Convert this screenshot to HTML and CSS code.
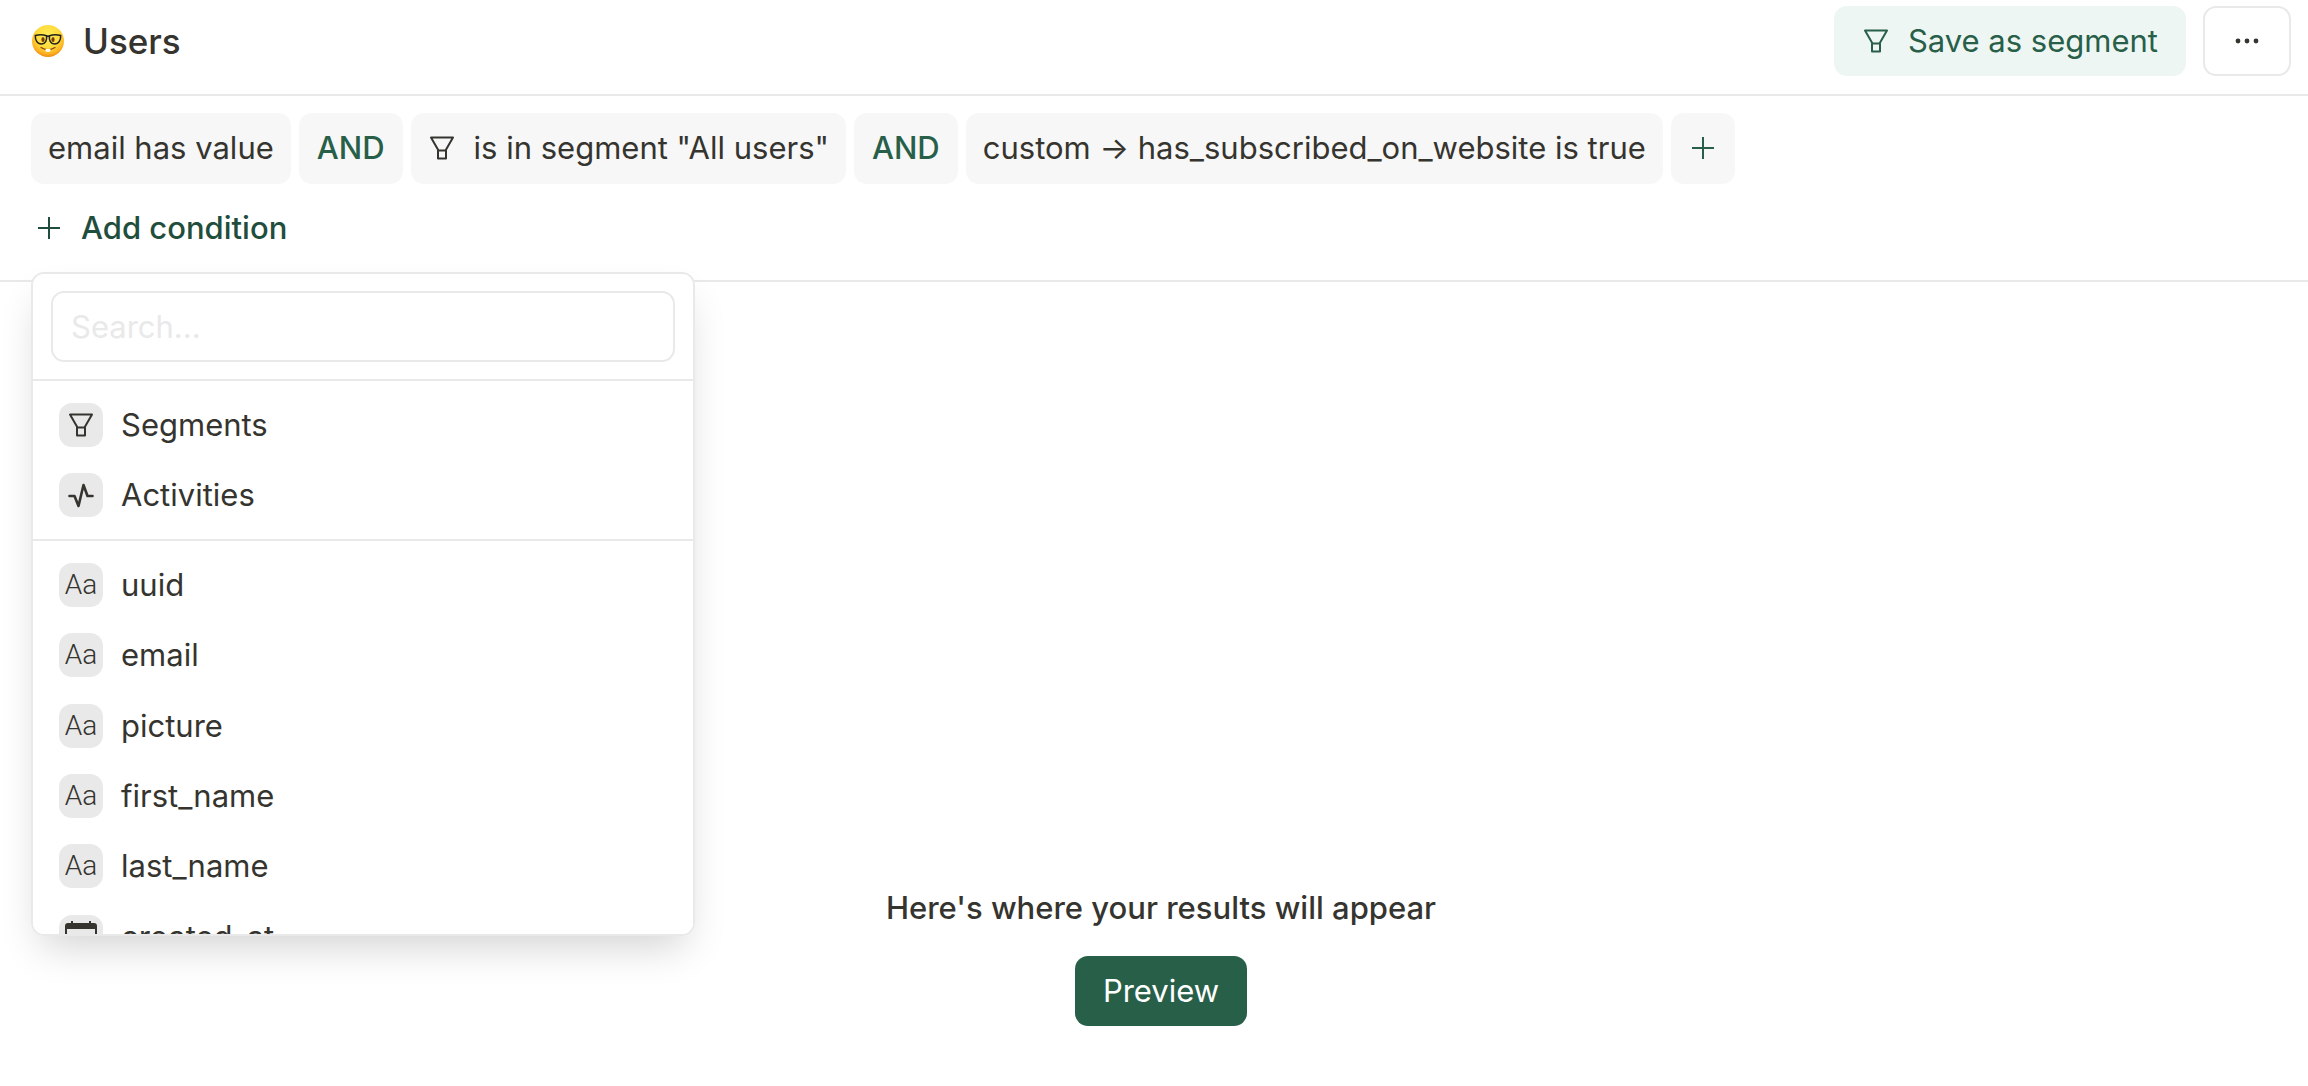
FILE: index.html
```html
<!DOCTYPE html>
<html lang="en">
<head>
<meta charset="utf-8">
<meta name="viewport" content="width=device-width, initial-scale=1">
<title>Users</title>
<link rel="stylesheet" href="styles.css">
</head>
<body>
<svg class="sprite" aria-hidden="true">
  <symbol id="funnel" viewBox="0 0 28 28">
    <path d="M3 3.5h22l-7.500 13h-7zM10 16.500h8v8h-8z" fill="none" stroke="currentColor" stroke-width="2" stroke-linejoin="round"/>
  </symbol>
  <symbol id="plus" viewBox="0 0 28 28">
    <path d="M14 3v22M3 14h22" fill="none" stroke="currentColor" stroke-width="2"/>
  </symbol>
  <symbol id="pulse" viewBox="0 0 28 28">
    <path d="M2.500 15h5l4 10 5-21 4 11h5" fill="none" stroke="currentColor" stroke-width="2.600" stroke-linecap="round" stroke-linejoin="round"/>
  </symbol>
  <symbol id="calendar" viewBox="0 0 32 32">
    <path d="M6 0h2v2h16V0h2v2h3a3 3 0 0 1 3 3v22a3 3 0 0 1-3 3H3a3 3 0 0 1-3-3V5a3 3 0 0 1 3-3h3zM2 8v19a1 1 0 0 0 1 1h26a1 1 0 0 0 1-1V8z" fill="currentColor"/>
  </symbol>
</svg>

<header class="topbar">
  <h1 class="title">
    <svg class="emoji" viewBox="0 0 34 34" role="img" aria-label="Nerd face">
      <defs>
        <radialGradient id="face" cx=".5" cy=".35" r=".65">
          <stop offset="0" stop-color="#ffee58"/>
          <stop offset=".55" stop-color="#ffdc3c"/>
          <stop offset=".85" stop-color="#fcb021"/>
          <stop offset="1" stop-color="#ec8a12"/>
        </radialGradient>
      </defs>
      <circle cx="17" cy="17" r="16" fill="url(#face)"/>
      <ellipse cx="12" cy="15.500" rx="1.600" ry="2.500" fill="#7a3a08"/>
      <ellipse cx="22" cy="15.500" rx="1.600" ry="2.500" fill="#7a3a08"/>
      <path d="M4.300 11.500q6-1.800 11.200.3c.6 4-.8 8-5 8.200-4.500 0-6.300-4-6.200-8.500zM29.700 11.500q-6-1.800-11.200.3c-.6 4 .8 8 5 8.200 4.500 0 6.300-4 6.200-8.500z" fill="none" stroke="#25221c" stroke-width="1.500"/>
      <path d="M15.300 12.500q1.700-.8 3.400 0" fill="none" stroke="#25221c" stroke-width="1.800"/>
      <path d="M10 23.500q7 4.500 14 0" fill="none" stroke="#8a4a10" stroke-width="1.200" stroke-linecap="round"/>
      <path d="M14.600 25h4.800v2.600q-2.400.8-4.800 0z" fill="#fff"/>
    </svg>
    <span>Users</span>
  </h1>
  <div class="actions">
    <button type="button" class="button button-soft">
      <svg class="icon" aria-hidden="true"><use href="#funnel"/></svg>
      Save as segment
    </button>
    <button type="button" class="button button-outline" aria-label="More actions">
      <svg class="icon" viewBox="0 0 28 28" fill="currentColor" aria-hidden="true">
        <circle cx="5" cy="14" r="2.400"/><circle cx="14" cy="14" r="2.400"/><circle cx="23" cy="14" r="2.400"/>
      </svg>
    </button>
  </div>
</header>

<section class="filters" aria-label="Filters">
  <div class="chips">
    <button type="button" class="chip">email has value</button>
    <button type="button" class="chip chip-operator">AND</button>
    <button type="button" class="chip">
      <svg class="icon" aria-hidden="true"><use href="#funnel"/></svg>
      is in segment "All users"
    </button>
    <button type="button" class="chip chip-operator">AND</button>
    <button type="button" class="chip">custom → has_subscribed_on_website is true</button>
    <button type="button" class="chip chip-operator" aria-label="Add to group">
      <svg class="icon" aria-hidden="true"><use href="#plus"/></svg>
    </button>
  </div>
  <div class="add">
    <button type="button" class="add-button" aria-expanded="true">
      <svg class="icon" aria-hidden="true"><use href="#plus"/></svg>
      Add condition
    </button>
    <div class="menu">
      <div class="menu-search">
        <input type="search" class="search" placeholder="Search..." aria-label="Search properties">
      </div>
      <div class="menu-group">
        <button type="button" class="option"><span class="badge"><svg class="icon" aria-hidden="true"><use href="#funnel"/></svg></span>Segments</button>
        <button type="button" class="option"><span class="badge"><svg class="icon" aria-hidden="true"><use href="#pulse"/></svg></span>Activities</button>
      </div>
      <div class="menu-group menu-properties">
        <button type="button" class="option"><span class="badge" aria-hidden="true">Aa</span>uuid</button>
        <button type="button" class="option"><span class="badge" aria-hidden="true">Aa</span>email</button>
        <button type="button" class="option"><span class="badge" aria-hidden="true">Aa</span>picture</button>
        <button type="button" class="option"><span class="badge" aria-hidden="true">Aa</span>first_name</button>
        <button type="button" class="option"><span class="badge" aria-hidden="true">Aa</span>last_name</button>
        <button type="button" class="option"><span class="badge"><svg class="icon icon-large" aria-hidden="true"><use href="#calendar"/></svg></span>created_at</button>
      </div>
    </div>
  </div>
</section>

<main class="results">
  <p class="results-text">Here's where your results will appear</p>
  <button type="button" class="button button-primary">Preview</button>
</main>
</body>
</html>
```
FILE: styles.css
```css
:root {
  --text: #35342f;
  --green: #285f49;
  --green-dark: #1f4e3d;
  --line: #e9e9e9;
  --chip: #f7f7f7;
  --radius: 13px;
}

* {
  box-sizing: border-box;
}

body {
  margin: 0;
  background: #fff;
  color: var(--text);
  font: 400 31px/40px Inter, "Liberation Sans", sans-serif;
}

button,
input {
  margin: 0;
  border: 0;
  background: none;
  color: inherit;
  font: inherit;
}

button {
  display: flex;
  align-items: center;
  gap: 18px;
  padding: 0;
  cursor: pointer;
  white-space: nowrap;
}

.sprite {
  position: absolute;
  width: 0;
  height: 0;
}

.icon {
  display: block;
  flex: none;
  width: 28px;
  height: 28px;
}

.icon-large {
  width: 32px;
  height: 32px;
}

.topbar {
  display: flex;
  align-items: center;
  justify-content: space-between;
  padding: 6px 17px 18px 31px;
  border-bottom: 2px solid var(--line);
}

.title {
  display: flex;
  align-items: center;
  gap: 18px;
  margin: 0;
  font-size: 35px;
  font-weight: 500;
}

.emoji {
  width: 34px;
  height: 34px;
}

.actions {
  display: flex;
  gap: 17px;
}

.button {
  height: 70px;
  padding: 0 28px;
  border-radius: var(--radius);
}

.button-soft {
  background: #eef6f3;
  color: var(--green);
}

.button-outline {
  border: 2px solid var(--line);
}

.button-primary {
  background: var(--green);
  color: #fff;
}

.filters {
  padding: 17px 17px 17px 31px;
  border-bottom: 2px solid var(--line);
}

.chips {
  display: flex;
  flex-wrap: wrap;
  gap: 8px;
}

.chip {
  height: 71px;
  padding: 0 17px 2px;
  border-radius: var(--radius);
  background: var(--chip);
}

.chip-operator {
  padding: 0 18px 2px;
  color: var(--green);
  font-weight: 500;
}

.add {
  position: relative;
  margin-top: 8px;
}

.add-button {
  height: 71px;
  padding: 0 4px;
  color: var(--green-dark);
  font-weight: 500;
}

.menu {
  position: absolute;
  top: 80px;
  left: 0;
  width: 664px;
  height: 664px;
  overflow: auto;
  scrollbar-width: none;
  border: 2px solid var(--line);
  border-radius: var(--radius);
  background: #fff;
  box-shadow: 0 20px 40px -10px rgba(0, 0, 0, 0.18);
}

.menu-search {
  padding: 17px 18px;
}

.search {
  display: block;
  width: 100%;
  height: 71px;
  padding: 0 18px;
  border: 2px solid var(--line);
  border-radius: var(--radius);
  appearance: none;
}

.search::placeholder {
  color: var(--line);
  opacity: 1;
}

.menu-group {
  padding: 9px 8px;
  border-top: 2px solid var(--line);
}

.menu-properties {
  display: grid;
  min-height: 442px;
}

.option {
  width: 100%;
  min-height: 70px;
  padding: 0 18px;
}

.badge {
  display: flex;
  flex: none;
  align-items: center;
  justify-content: center;
  width: 44px;
  height: 44px;
  border-radius: var(--radius);
  background: var(--line);
  font-family: Roboto, Inter, sans-serif;
  font-size: 28px;
  font-weight: 300;
}

.results {
  display: flex;
  flex-direction: column;
  align-items: center;
  gap: 28px;
  padding: 606px 17px 59px 31px;
}

.results-text {
  margin: 0;
  font-weight: 500;
}
```
